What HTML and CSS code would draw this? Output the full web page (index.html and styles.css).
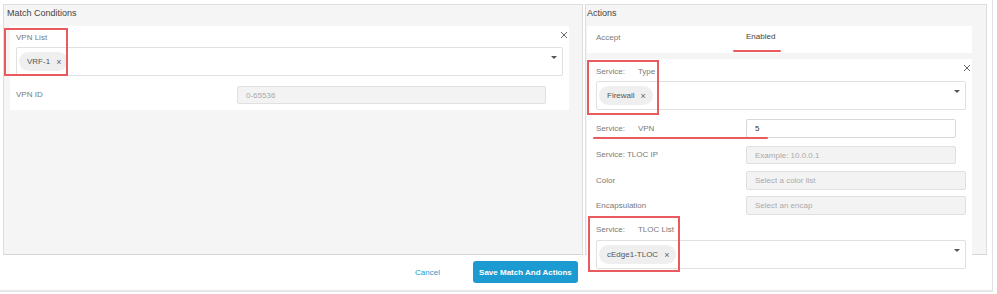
FILE: index.html
```html
<!DOCTYPE html>
<html lang="en">
<head>
  <meta charset="UTF-8">
  <meta name="viewport" content="width=device-width, initial-scale=1.0">
  <title>Match Conditions and Actions</title>
  <link rel="stylesheet" href="styles.css">
</head>
<body>
  <div class="dialog">
    <div class="panels">
      <section class="panel panel-match">
        <h2 class="panel-title">Match Conditions</h2>

        <div class="card card-vpn">
          <div class="card-head">
            <span class="field-label">VPN List</span>
            <span class="close"><svg width="8" height="8" viewBox="0 0 8 8"><path d="M1 1L7 7M7 1L1 7" stroke="#666" stroke-width="1"/></svg></span>
          </div>
          <div class="select">
            <span class="chip">VRF-1 <span class="chip-x">&times;</span></span>
            <span class="caret"></span>
          </div>
          <div class="row row-vpnid">
            <span class="row-label">VPN ID</span>
            <div class="input input-disabled">0-65536</div>
          </div>
        </div>
      </section>

      <section class="panel panel-actions">
        <h2 class="panel-title">Actions</h2>

        <div class="card card-accept">
          <span class="row-label">Accept</span>
          <span class="accept-value">Enabled</span>
        </div>

        <div class="card card-service">
          <div class="card-head">
            <span class="field-label">Service:<span class="sub">Type</span></span>
            <span class="close"><svg width="8" height="8" viewBox="0 0 8 8"><path d="M1 1L7 7M7 1L1 7" stroke="#666" stroke-width="1"/></svg></span>
          </div>
          <div class="select select-wide">
            <span class="chip">Firewall <span class="chip-x">&times;</span></span>
            <span class="caret"></span>
          </div>

          <div class="row row-svpn">
            <span class="row-label">Service:<span class="sub">VPN</span></span>
            <div class="input input-value">5</div>
          </div>
          <div class="row row-tlocip">
            <span class="row-label">Service: TLOC IP</span>
            <div class="input input-disabled">Example: 10.0.0.1</div>
          </div>
          <div class="row row-color">
            <span class="row-label">Color</span>
            <div class="input input-disabled input-long">Select a color list</div>
          </div>
          <div class="row row-encap">
            <span class="row-label">Encapsulation</span>
            <div class="input input-disabled input-long">Select an encap</div>
          </div>

          <div class="field-label tloc-label">Service:<span class="sub">TLOC List</span></div>
          <div class="select select-wide">
            <span class="chip">cEdge1-TLOC <span class="chip-x">&times;</span></span>
            <span class="caret"></span>
          </div>
        </div>
      </section>
    </div>

    <div class="footer">
      <a class="link-cancel">Cancel</a>
      <button class="button-save">Save Match And Actions</button>
    </div>

    <!-- red annotations drawn over the screenshot -->
    <div class="mark mark-box mark-vpnlist"></div>
    <div class="mark mark-box mark-type"></div>
    <div class="mark mark-box mark-tloc"></div>
    <div class="mark mark-line mark-enabled"></div>
    <div class="mark mark-line mark-svpn"></div>
  </div>
</body>
</html>
```

FILE: styles.css
```css
body {
  margin: 0;
  background: #fff;
  font-family: 'Liberation Sans', Arial, sans-serif;
  color: #666;
}

.dialog {
  position: relative;
  width: 993px;
  height: 292px;
  box-sizing: border-box;
  padding: 4px 0 0 3px;
  border-right: 1px solid #e2e2e2;
  border-bottom: 2px solid #e6e6e6;
}

.panels {
  display: flex;
  gap: 2px;
  height: 251px;
}

.panel {
  box-sizing: border-box;
  height: 251px;
  background-color: #f5f5f5;
  border: 1px solid #dedede;
  border-bottom-color: #d6d6d6;
}

.panel-match {
  width: 580px;
}

.panel-actions {
  width: 402px;
}

.panel-title {
  margin: 0;
  height: 21px;
  line-height: 16px;
  padding-left: 3px;
  font-size: 9px;
  font-weight: normal;
  color: #444;
}

.panel-actions .panel-title {
  padding-left: 1px;
}

.card {
  background: #fff;
  box-sizing: border-box;
}

.card-vpn {
  margin: 0 13px 0 6px;
  height: 84px;
  padding: 6px 6px 6px 6px;
}

.card-head {
  display: flex;
  justify-content: space-between;
  align-items: flex-start;
  height: 12px;
}

.field-label,
.row-label {
  font-size: 8px;
  line-height: 12px;
  color: #7a7a7a;
}

.sub {
  margin-left: 13px;
}

.close {
  display: block;
  width: 8px;
  height: 8px;
  margin-right: -5px;
  margin-top: -1px;
}

.close svg {
  display: block;
}

.card-service .close {
  margin-top: -2px;
}

.select {
  display: flex;
  align-items: center;
  box-sizing: border-box;
  height: 29px;
  margin-top: 3px;
  padding-left: 2px;
  border: 1px solid #e0e0e0;
  border-radius: 2px;
  background: #fff;
}

.chip {
  display: inline-flex;
  align-items: center;
  height: 19px;
  padding: 0 7px 0 8px;
  border-radius: 10px;
  background: #efefef;
  font-size: 8px;
  color: #555;
}

.chip-x {
  margin-left: 6px;
  font-size: 9px;
  color: #666;
}

.caret {
  margin-left: auto;
  margin-right: 5px;
  align-self: flex-start;
  margin-top: 8px;
  width: 0;
  height: 0;
  border-left: 3px solid transparent;
  border-right: 3px solid transparent;
  border-top: 3px solid #555;
}

.row {
  display: flex;
  align-items: center;
}

.row-label {
  flex: none;
}

.row-vpnid {
  margin-top: 10px;
  height: 18px;
}

.row-vpnid .row-label {
  width: 221px;
}

.input {
  box-sizing: border-box;
  display: flex;
  align-items: center;
  padding-left: 8px;
  border: 1px solid #dcdcdc;
  border-radius: 2px;
  font-size: 8px;
  color: #333;
  background: #fff;
}

.input-disabled {
  background: #f3f3f3;
  border-color: #e0e0e0;
  color: #aaa;
}

.row-vpnid .input {
  width: 309px;
  height: 18px;
}

.card-accept {
  display: flex;
  margin: 0 14px 0 1px;
  height: 27px;
  padding: 6px 9px 0;
}

.card-accept .row-label {
  width: 150px;
}

.accept-value {
  font-size: 8px;
  line-height: 10px;
  color: #444;
}

.card-service {
  margin: 6px 14px 0 1px;
  padding: 7px 6px 6px 9px;
}

.card-service .row-label {
  width: 150px;
}

.card-service .input {
  width: 210px;
}

.card-service .input-long {
  width: 220px;
}

.row-svpn {
  margin-top: 9px;
}

.row-svpn .input {
  height: 19px;
  border-color: #d8d8d8;
}

.row-tlocip {
  margin-top: 8px;
}

.row-tlocip .input {
  height: 18px;
}

.row-color {
  margin-top: 7px;
}

.row-color .input,
.row-encap .input {
  height: 19px;
}

.row-encap {
  margin-top: 6px;
}

.tloc-label {
  margin-top: 9px;
}

.tloc-label + .select {
  margin-top: 4px;
}

.footer {
  display: flex;
  justify-content: center;
  align-items: center;
  gap: 33px;
  padding-top: 6px;
  padding-right: 2px;
}

.link-cancel {
  font-size: 8px;
  color: #1d9ad2;
  cursor: pointer;
}

.button-save {
  height: 22px;
  width: 105px;
  padding: 0;
  border: none;
  border-radius: 3px;
  background-color: #1b9bd1;
  color: #fff;
  font-family: 'Liberation Sans', Arial, sans-serif;
  font-size: 8px;
  font-weight: bold;
  cursor: pointer;
}

.mark {
  position: absolute;
  box-sizing: border-box;
}

.mark-box {
  border: 2px solid #e95a5e;
}

.mark-line {
  height: 2px;
  border-radius: 1px;
  background: #e95a5e;
}

.mark-vpnlist {
  left: 4px;
  top: 28px;
  width: 64px;
  height: 48px;
}

.mark-type {
  left: 587px;
  top: 60px;
  width: 72px;
  height: 55px;
}

.mark-tloc {
  left: 588px;
  top: 216px;
  width: 92px;
  height: 56px;
}

.mark-enabled {
  left: 733px;
  top: 50px;
  width: 48px;
}

.mark-svpn {
  left: 593px;
  top: 137px;
  width: 175px;
}
```
